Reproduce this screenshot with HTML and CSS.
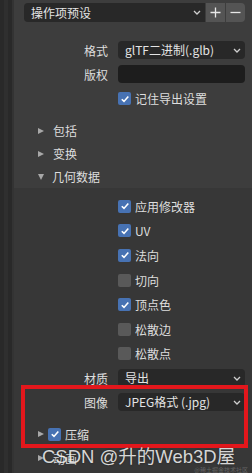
FILE: index.html
```html
<!DOCTYPE html>
<html lang="zh">
<head>
  <meta charset="UTF-8">
  <title>导出 glTF</title>
  <link rel="stylesheet" href="styles.css">
</head>
<body>
  <div class="sidebar"></div>
  <div class="panel">
    <!-- preset row -->
    <div class="preset-row">
      <div class="dropdown preset">
        <span>操作项预设</span>
        <svg class="chev" width="8" height="5" viewBox="0 0 8 5"><polyline points="1,1 4,4 7,1" /></svg>
      </div>
      <div class="btn"><svg width="11" height="11" viewBox="0 0 11 11"><path d="M5.5 0.5v10M0.5 5.5h10" /></svg></div>
      <div class="btn"><svg width="11" height="11" viewBox="0 0 11 11"><path d="M0.5 5.5h10" /></svg></div>
    </div>

    <div class="row first">
      <div class="label">格式</div>
      <div class="dropdown"><span>glTF二进制(.glb)</span><svg class="chev" width="8" height="5" viewBox="0 0 8 5"><polyline points="1,1 4,4 7,1" /></svg></div>
    </div>
    <div class="row">
      <div class="label">版权</div>
      <div class="textfield"></div>
    </div>
    <div class="row check-row tall">
      <span class="box on"><svg width="10" height="10" viewBox="0 0 10 10"><polyline points="1.8,5.2 4,7.4 8.3,2.4" /></svg></span>
      <span>记住导出设置</span>
    </div>

    <div class="header first-header"><span class="tri right"></span>包括</div>
    <div class="header"><span class="tri right"></span>变换</div>
    <div class="header"><span class="tri down"></span>几何数据</div>

    <div class="subpanel">
      <div class="row check-row sub">
        <span class="box on"><svg width="10" height="10" viewBox="0 0 10 10"><polyline points="1.8,5.2 4,7.4 8.3,2.4" /></svg></span>
        <span>应用修改器</span>
      </div>
      <div class="row check-row sub">
        <span class="box on"><svg width="10" height="10" viewBox="0 0 10 10"><polyline points="1.8,5.2 4,7.4 8.3,2.4" /></svg></span>
        <span>UV</span>
      </div>
      <div class="row check-row sub">
        <span class="box on"><svg width="10" height="10" viewBox="0 0 10 10"><polyline points="1.8,5.2 4,7.4 8.3,2.4" /></svg></span>
        <span>法向</span>
      </div>
      <div class="row check-row sub">
        <span class="box"></span>
        <span>切向</span>
      </div>
      <div class="row check-row sub">
        <span class="box on"><svg width="10" height="10" viewBox="0 0 10 10"><polyline points="1.8,5.2 4,7.4 8.3,2.4" /></svg></span>
        <span>顶点色</span>
      </div>
      <div class="row check-row sub">
        <span class="box"></span>
        <span>松散边</span>
      </div>
      <div class="row check-row sub">
        <span class="box"></span>
        <span>松散点</span>
      </div>

      <div class="row">
        <div class="label">材质</div>
        <div class="dropdown"><span>导出</span><svg class="chev" width="8" height="5" viewBox="0 0 8 5"><polyline points="1,1 4,4 7,1" /></svg></div>
      </div>
      <div class="row">
        <div class="label">图像</div>
        <div class="dropdown"><span>JPEG格式 (.jpg)</span><svg class="chev" width="8" height="5" viewBox="0 0 8 5"><polyline points="1,1 4,4 7,1" /></svg></div>
      </div>

      <div class="header compress"><span class="tri right"></span>
        <span class="box on small-gap"><svg width="10" height="10" viewBox="0 0 10 10"><polyline points="1.8,5.2 4,7.4 8.3,2.4" /></svg></span>压缩</div>
      <div class="header anim"><span class="tri right"></span>动画</div>
    </div>
  </div>

  <!-- annotation overlays -->
  <div class="highlight"></div>
  <div class="watermark">CSDN @升的Web3D屋</div>
  <div class="watermark-small">@稀土掘金技术社区</div>
</body>
</html>
```

FILE: styles.css
```css
body {
  margin: 0;
  width: 252px;
  height: 473px;
  overflow: hidden;
  display: flex;
  background: #2b2b2b;
  font-family: "Noto Sans CJK SC", "Noto Sans", sans-serif;
  font-size: 12px;
  color: #dedede;
  position: relative;
}
.sidebar {
  width: 12px;
  border-right: 2px solid #333;
  background: linear-gradient(to right, #292929 0, #292929 4px, #2f2f2f 4px, #2f2f2f 8px, #292929 8px);
}
.panel {
  flex: 1;
  background: #3d3d3d;
  padding: 3px 7px 0 0;
  display: flex;
  flex-direction: column;
}
/* preset */
.preset-row {
  display: flex;
  height: 19px;
  margin-left: 10px;
  gap: 1px;
}
.dropdown {
  flex: 1;
  height: 18px;
  background: #282828;
  border-radius: 4px;
  display: flex;
  align-items: center;
  justify-content: space-between;
  padding: 0 4px 0 7px;
  color: #e4e4e4;
  line-height: 1;
}
.preset {
  height: 19px;
  border-radius: 4px 0 0 4px;
}
.chev polyline {
  fill: none;
  stroke: #cfcfcf;
  stroke-width: 1.3;
}
.btn {
  width: 19px;
  height: 19px;
  background: #545454;
  display: flex;
  align-items: center;
  justify-content: center;
}
.btn:last-child {
  border-radius: 0 4px 4px 0;
}
.btn path {
  stroke: #e8e8e8;
  stroke-width: 1.3;
}
/* property rows */
.row {
  display: flex;
  align-items: center;
  height: 24px;
}
.row.first {
  margin-top: 16px;
}
.row.tall {
  height: 25px;
}
.row.sub {
  height: 24.6px;
}
.label {
  width: 94px;
  margin-right: 10px;
  text-align: right;
}
.textfield {
  flex: 1;
  height: 18px;
  background: #1d1d1d;
  border-radius: 4px;
}
.check-row {
  padding-left: 104px;
}
.box {
  width: 13px;
  height: 13px;
  border-radius: 2px;
  background: #595959;
  margin-right: 4px;
  display: inline-flex;
  align-items: center;
  justify-content: center;
  flex-shrink: 0;
}
.box.on {
  background: #4772b3;
}
.box polyline {
  fill: none;
  stroke: #fff;
  stroke-width: 1.6;
}
/* collapsible headers */
.header {
  display: flex;
  align-items: center;
  height: 23px;
  padding-left: 24px;
}
.first-header {
  margin-top: 8px;
}
.tri {
  width: 0;
  height: 0;
  margin-right: 9px;
}
.tri.right {
  border-top: 3.5px solid transparent;
  border-bottom: 3.5px solid transparent;
  border-left: 6px solid #a8a8a8;
}
.tri.down {
  border-left: 3.5px solid transparent;
  border-right: 3.5px solid transparent;
  border-top: 6px solid #a8a8a8;
  margin-right: 8px;
}
.subpanel {
  flex: 1;
  background: #373737;
  margin-right: -7px;
  padding: 6px 7px 0 0;
}
.compress {
  height: 24px;
  margin-top: 8px;
}
.compress .tri {
  margin-right: 4px;
}
.anim {
  height: 24px;
}
/* annotation overlays */
.highlight {
  position: absolute;
  left: 21px;
  top: 385px;
  width: 219px;
  height: 55px;
  border: 4px solid #e3171c;
}
.watermark {
  position: absolute;
  left: 42px;
  top: 442px;
  font-family: "Liberation Sans", "Noto Sans CJK SC", sans-serif;
  font-size: 18.5px;
  color: rgba(255, 255, 255, 0.82);
  text-shadow: 0 0 2px rgba(0, 0, 0, 0.4);
  white-space: nowrap;
}
.watermark-small {
  position: absolute;
  right: 4px;
  top: 465px;
  font-size: 6px;
  color: rgba(255, 255, 255, 0.22);
  white-space: nowrap;
}
```
